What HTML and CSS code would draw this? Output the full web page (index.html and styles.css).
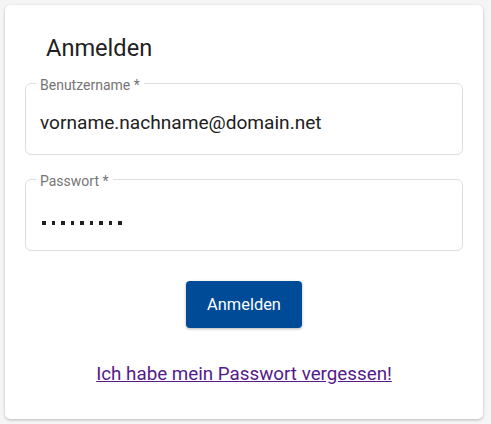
FILE: index.html
```html
<!DOCTYPE html>
<html lang="de">
<head>
<meta charset="utf-8">
<title>Anmelden</title>
<link rel="stylesheet" href="styles.css">
</head>
<body>
<main class="card">
  <h1 class="title">Anmelden</h1>
  <div class="field field-user">
    <label class="field-label">Benutzername *</label>
    <input class="field-input" type="text" value="vorname.nachname@domain.net">
  </div>
  <div class="field field-pass">
    <label class="field-label">Passwort *</label>
    <div class="dots"><span></span><span></span><span></span><span></span><span></span><span></span><span></span><span></span><span></span></div>
  </div>
  <div class="actions">
    <button class="btn" type="button">Anmelden</button>
  </div>
  <div class="forgot">
    <a class="forgot-link" href="#">Ich habe mein Passwort vergessen!</a>
  </div>
</main>
</body>
</html>
```
FILE: styles.css
```css
html, body {
  margin: 0;
  padding: 0;
}
body {
  background: #f5f5f5;
  font-family: Roboto, "Liberation Sans", sans-serif;
  color: #212121;
  width: 491px;
  height: 424px;
  overflow: hidden;
}
.card {
  box-sizing: border-box;
  margin: 5px 0 0 5px;
  width: 478px;
  height: 414px;
  background: #fff;
  border-radius: 5px;
  box-shadow: 0 1px 3px rgba(0,0,0,0.25);
  padding: 0 20px;
  display: flex;
  flex-direction: column;
}
.title {
  margin: 27px 0 0 21px;
  font-size: 23.6px;
  font-weight: 400;
  line-height: 32px;
  color: #212121;
}
.field {
  position: relative;
  box-sizing: border-box;
  padding: 0 14px;
  border: 1px solid #dedede;
  border-radius: 6px;
  height: 72px;
  display: flex;
  align-items: center;
}
.field-user {
  margin-top: 19px;
}
.field-pass {
  margin-top: 24px;
}
.field-label {
  position: absolute;
  left: 10px;
  top: -6px;
  padding: 0 4px;
  background: #fff;
  font-size: 14px;
  line-height: 14px;
  color: #757575;
}
.field-input {
  border: 0;
  outline: 0;
  padding: 0;
  margin: 7px 0 0 0;
  width: 100%;
  font-family: inherit;
  font-size: 19.1px;
  color: #212121;
  background: transparent;
}
.dots {
  display: flex;
  gap: 6px;
  margin: 16px 0 0 2px;
}
.dots span {
  width: 3.5px;
  height: 4px;
  background: #1f1f1f;
}
.actions {
  display: flex;
  justify-content: center;
  margin-top: 30px;
}
.btn {
  width: 116px;
  height: 47px;
  border: 0;
  border-radius: 4px;
  background: #004b97;
  color: #fff;
  font-family: inherit;
  font-size: 16.4px;
  box-shadow: 0 1px 3px rgba(0,0,0,0.3);
}
.forgot {
  display: flex;
  justify-content: center;
  margin-top: 35px;
}
.forgot-link {
  color: #551a8b;
  font-size: 18.8px;
  text-decoration: underline;
}
```
